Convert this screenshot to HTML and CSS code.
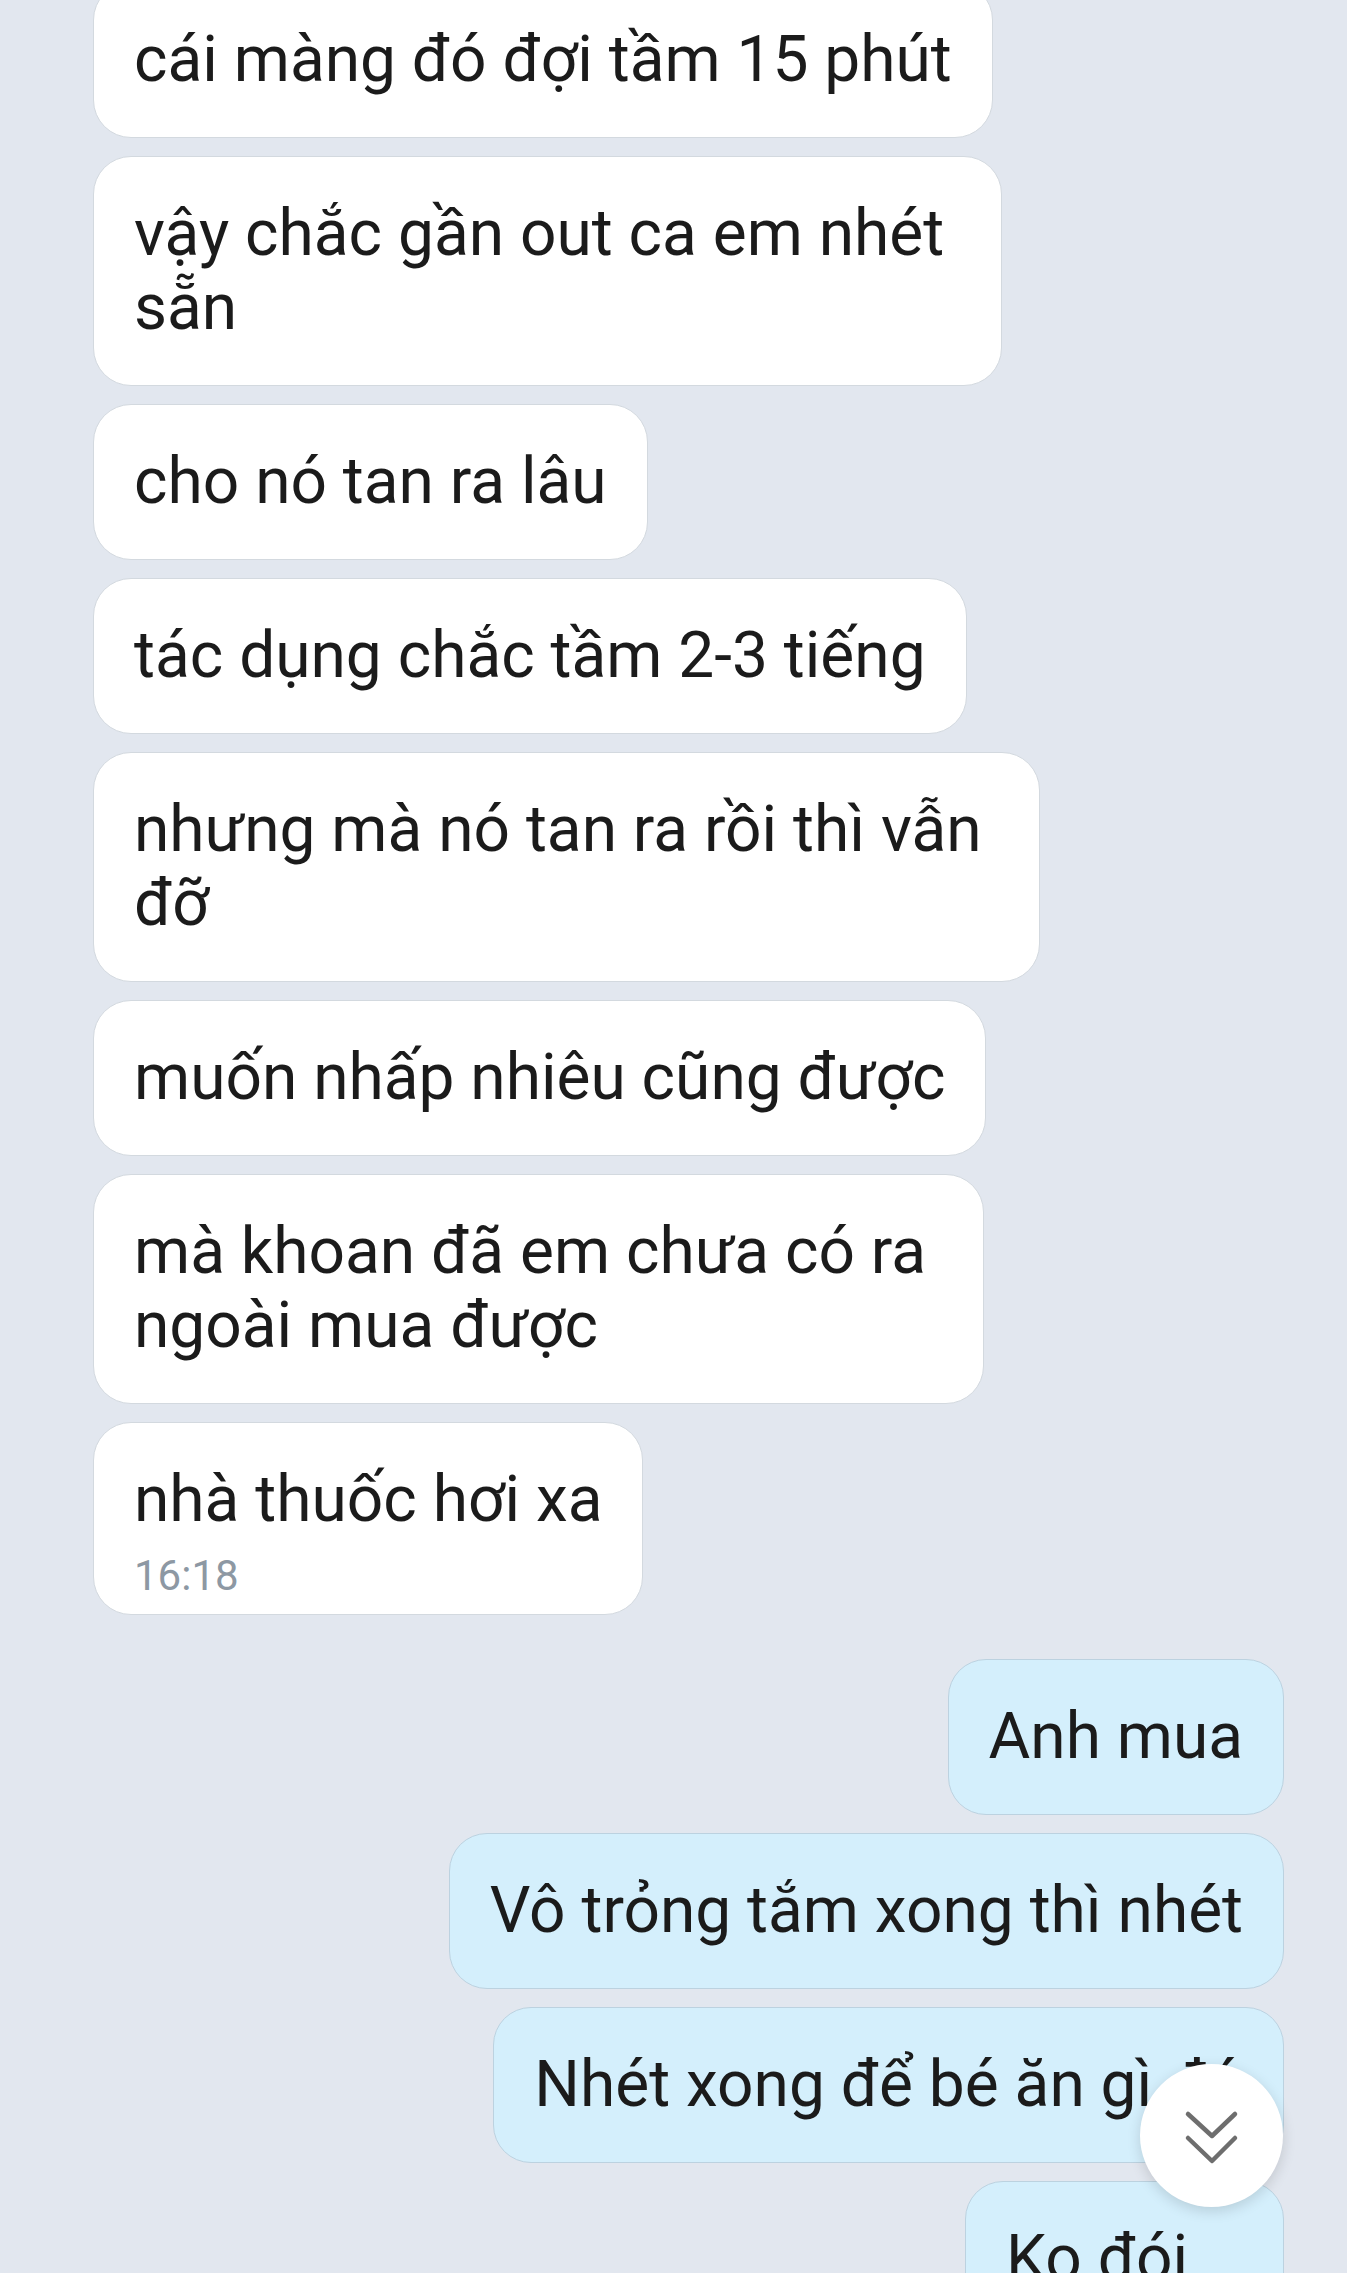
FILE: index.html
```html
<!DOCTYPE html>
<html lang="vi">
<head>
<meta charset="utf-8">
<title>Chat</title>
<link rel="stylesheet" href="styles.css">
</head>
<body>
<div class="chat">
  <div class="msg in">cái màng đó đợi tầm 15 phút</div>
  <div class="msg in wrap">vậy chắc gần out ca em nhét<br>sẵn</div>
  <div class="msg in">cho nó tan ra lâu</div>
  <div class="msg in">tác dụng chắc tầm 2-3 tiếng</div>
  <div class="msg in wrap">nhưng mà nó tan ra rồi thì vẫn<br>đỡ</div>
  <div class="msg in">muốn nhấp nhiêu cũng được</div>
  <div class="msg in wrap">mà khoan đã em chưa có ra<br>ngoài mua được</div>
  <div class="msg in last">nhà thuốc hơi xa<div class="time">16:18</div></div>
  <div class="msg out first">Anh mua</div>
  <div class="msg out">Vô trỏng tắm xong thì nhét</div>
  <div class="msg out">Nhét xong để bé ăn gì đó</div>
  <div class="msg out wide">Ko đói</div>
</div>
<div class="scroll-btn">
  <svg width="143" height="143" viewBox="0 0 143 143">
    <path d="M48 50 L72 72 L95 50 M48 74 L72 97 L95 74" fill="none" stroke="#6e6e6e" stroke-width="4.5" stroke-linecap="round" stroke-linejoin="round"/>
  </svg>
</div>
</body>
</html>
```
FILE: styles.css
```css
html, body {
  margin: 0;
  padding: 0;
}
body {
  background: #e2e7ef;
  width: 1347px;
  height: 2273px;
  overflow: hidden;
  position: relative;
  font-family: Roboto, "Noto Sans", sans-serif;
}
.chat {
  display: flex;
  flex-direction: column;
  gap: 18px;
  padding: 0 63px 0 93px;
  margin-top: -18px;
}
.msg {
  font-size: 64px;
  line-height: 74px;
  color: #1b1b1b;
  padding: 40px 40px;
  border-radius: 38px;
  white-space: nowrap;
}
.msg.wrap {
  padding-right: 57px;
}
.msg.in {
  align-self: flex-start;
  background: #ffffff;
  border: 1px solid #d3d9df;
}
.msg.out {
  align-self: flex-end;
  background: #d4effc;
  border: 1px solid #bcd2e0;
}
.msg.wide {
  width: 237px;
}
.msg.last {
  padding-bottom: 14px;
}
.msg.out.first {
  margin-top: 26px;
}
.time {
  font-size: 42px;
  line-height: 49px;
  margin-top: 14px;
  color: #8d98a3;
}
.scroll-btn {
  position: absolute;
  left: 1140px;
  top: 2064px;
  width: 143px;
  height: 143px;
  border-radius: 50%;
  background: #ffffff;
  box-shadow: 0 4px 14px rgba(0, 0, 0, 0.14);
}
.scroll-btn svg {
  display: block;
}
```
